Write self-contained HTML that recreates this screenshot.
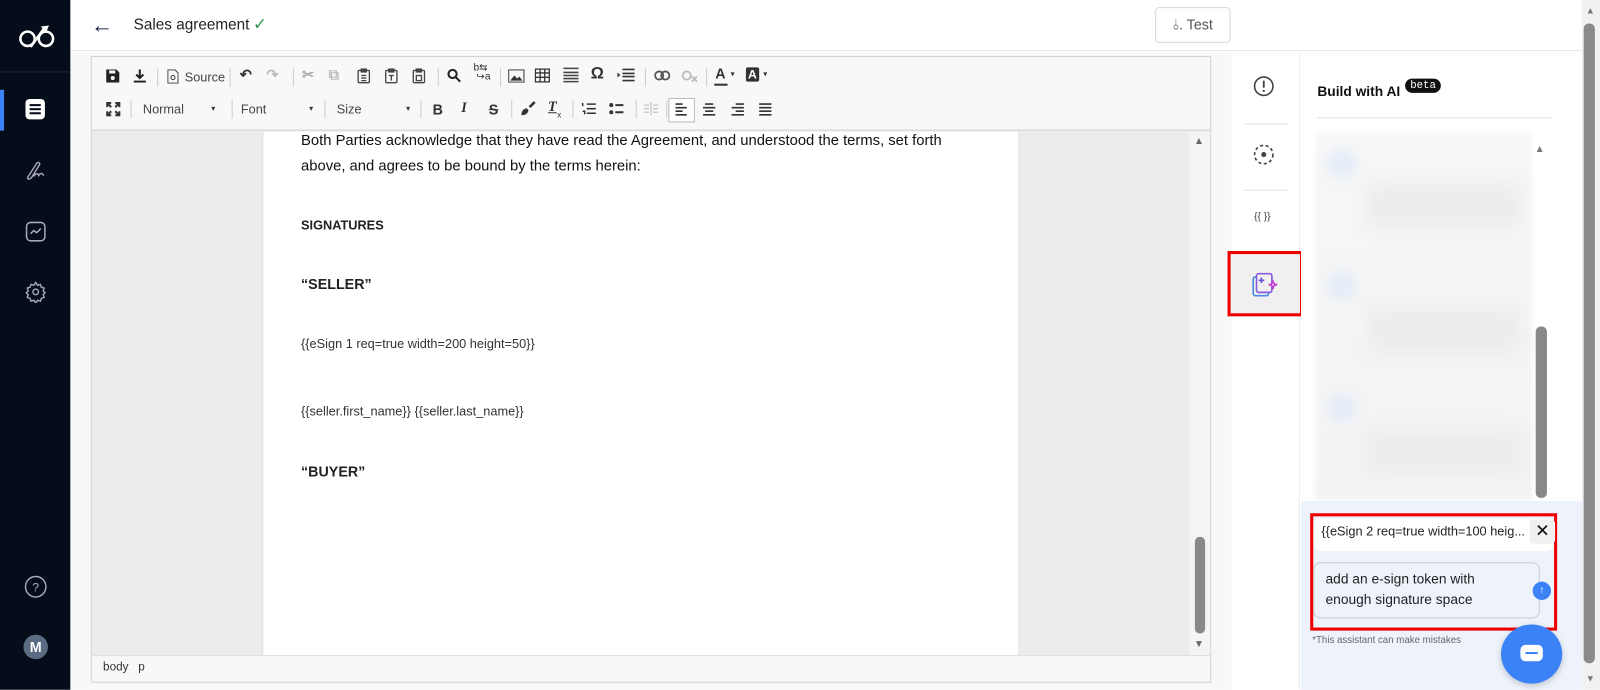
<!DOCTYPE html>
<html><head><meta charset="utf-8"><style>
*{box-sizing:border-box;margin:0;padding:0}
body{width:1600px;height:689px;overflow:hidden;background:#fff;font-family:"Liberation Sans",sans-serif;position:relative;color:#222}
#w{position:absolute;left:0;top:0;width:1568px;height:676px;transform:scale(1.0204);transform-origin:0 0}
.abs{position:absolute}
.side{left:0;top:0;width:69px;height:676px;background:#050d1a}
.tb{font-size:13px;color:#333}
.ic{position:absolute;color:#333;font-size:14px;font-weight:bold}
.sep{position:absolute;width:1px;height:18px;background:#ccc}
.doc{font-size:14.5px;color:#111;line-height:25px}
</style></head><body><div id="w">
<div class="abs side">
 <svg class="abs" style="left:18px;top:24px" width="38" height="24" viewBox="0 0 38 24"><circle cx="9" cy="14" r="7" fill="none" stroke="#fff" stroke-width="2.5"/><circle cx="27" cy="14" r="7" fill="none" stroke="#fff" stroke-width="2.5"/><path d="M12 22 L25 4" stroke="#fff" stroke-width="2.5"/><path d="M22 2 L30 1 L27 8z" fill="#fff"/></svg>
 <div class="abs" style="left:0;top:70px;width:69px;height:1px;background:#1e2838"></div>
 <div class="abs" style="left:0;top:88px;width:4px;height:40px;background:#3b82f6"></div>
 <div class="abs" style="left:25px;top:97px;width:19px;height:20px;border-radius:4px;background:#fff"></div>
 <div class="abs" style="left:29px;top:102px;width:11px;height:2px;background:#050d1a;box-shadow:0 4px 0 #050d1a,0 8px 0 #050d1a"></div>
 <svg class="abs" style="left:24px;top:156px" width="22" height="22" viewBox="0 0 22 22" fill="none" stroke="#aab" stroke-width="1.4"><path d="M3 18 L12 4 Q14 2 15 5 L7 18 Q3 21 3 18z M9 17 Q12 12 14 16 Q16 12 19 16"/></svg>
 <svg class="abs" style="left:25px;top:217px" width="20" height="20" viewBox="0 0 20 20" fill="none" stroke="#aab" stroke-width="1.5"><rect x="1" y="1" width="18" height="18" rx="4"/><path d="M5 12 L8 9 L11 11 L15 7"/></svg>
 <svg class="abs" style="left:24px;top:275px" width="22" height="22" viewBox="0 0 24 24" fill="none" stroke="#aab" stroke-width="1.5"><circle cx="12" cy="12" r="3"/><path d="M12 2l2 3 3-1 1 3 3 1-1 3 2 2-2 2 1 3-3 1-1 3-3-1-2 3-2-3-3 1-1-3-3-1 1-3-2-2 2-2-1-3 3-1 1-3 3 1z"/></svg>
 <svg class="abs" style="left:24px;top:564px" width="22" height="22" viewBox="0 0 22 22" fill="none" stroke="#aab" stroke-width="1.4"><circle cx="11" cy="11" r="10"/><text x="11" y="15.5" fill="#aab" stroke="none" font-size="12" text-anchor="middle" font-family="Liberation Sans">?</text></svg>
 <div class="abs" style="left:23px;top:622px;width:24px;height:24px;border-radius:50%;background:#5a6b82;color:#fff;font-weight:bold;font-size:14px;text-align:center;line-height:24px">M</div>
</div>
<div class="abs" style="left:69px;top:0;width:1481px;height:50px;background:#fff;border-bottom:1px solid #e6e8ec"></div>
<div class="abs" style="left:89px;top:12px;font-size:22px;color:#1e2a4a">←</div>
<div class="abs" style="left:131px;top:16px;font-size:15px;color:#222">Sales agreement</div>
<div class="abs" style="left:248px;top:14px;font-size:16px;color:#2a9a4a">✓</div>
<div class="abs" style="left:1132px;top:7px;width:74px;height:35px;border:1px solid #d5d8dc;border-radius:4px;font-size:14px;color:#555;text-align:center;line-height:33px">⫰. Test</div>
<div class="abs" style="left:69px;top:51px;width:1138px;height:625px;background:#f7f8fa"></div>
<div class="abs" style="left:89px;top:55px;width:1098px;height:614px;border:1px solid #d1d1d1;background:#ececec"></div>
<div class="abs" style="left:90px;top:56px;width:1096px;height:72px;background:#f8f8f8;border-bottom:1px solid #d1d1d1"></div>
<div class="abs tb" style="left:90px;top:56px;width:1096px;height:72px">
 <svg class="abs" style="left:14px;top:12px" width="13" height="13" viewBox="0 0 13 13"><path d="M0 1Q0 0 1 0H10L13 3V12Q13 13 12 13H1Q0 13 0 12z" fill="#222"/><rect x="3" y="1" width="6" height="3" fill="#f8f8f8"/><circle cx="6.5" cy="8.5" r="2" fill="#f8f8f8"/></svg>
 <svg class="abs" style="left:41px;top:12px" width="12" height="13" viewBox="0 0 12 13"><path d="M6 0v8M2.5 5 6 8.5 9.5 5" stroke="#222" stroke-width="2" fill="none"/><rect x="0" y="11" width="12" height="2" fill="#222"/></svg>
 <div class="sep" style="left:64px;top:11px"></div>
 <svg class="abs" style="left:74px;top:12px" width="11" height="14" viewBox="0 0 11 14" fill="none" stroke="#444"><path d="M.5.5h7l3 3v10h-10z"/><circle cx="5.5" cy="8" r="2"/></svg>
 <span class="abs" style="left:91px;top:13px;font-size:12.5px;color:#444">Source</span>
 <div class="sep" style="left:135px;top:11px"></div>
 <span class="ic" style="left:145px;top:9px">↶</span><span class="ic" style="left:171px;top:9px;color:#bbb">↷</span>
 <div class="sep" style="left:197px;top:11px"></div>
 <span class="ic" style="left:206px;top:9px;color:#aaa">✂</span><span class="ic" style="left:232px;top:9px;color:#bbb">⧉</span>
 <svg class="abs" style="left:260px;top:11px" width="80" height="15" viewBox="0 0 80 15" fill="none" stroke="#444" stroke-width="1.3"><rect x="1" y="2" width="11" height="12" rx="1"/><rect x="4" y="0.5" width="5" height="3" fill="#444"/><path d="M4 7h5M4 9.5h5M4 12h5"/><rect x="28" y="2" width="11" height="12" rx="1"/><rect x="31" y="0.5" width="5" height="3" fill="#444"/><path d="M31 7h5M33.5 7v5"/><rect x="55" y="2" width="11" height="12" rx="1"/><rect x="58" y="0.5" width="5" height="3" fill="#444"/><rect x="58" y="7" width="5" height="5"/></svg>
 <div class="sep" style="left:339px;top:11px"></div>
 <svg class="abs" style="left:348px;top:11px" width="14" height="14" viewBox="0 0 14 14" fill="none" stroke="#222" stroke-width="2"><circle cx="5.5" cy="5.5" r="4"/><path d="M8.5 8.5 13 13"/></svg>
 <span class="abs" style="left:374px;top:6px;font-size:10px;color:#333;line-height:9px">b⇆<br>&nbsp;↪a</span>
 <div class="sep" style="left:400px;top:11px"></div>
 <svg class="abs" style="left:408px;top:12px" width="16" height="13" viewBox="0 0 16 13"><rect x=".5" y=".5" width="15" height="12" fill="none" stroke="#333"/><path d="M2 11 6 6 9 9 11 7 14 11z" fill="#333"/></svg>
 <svg class="abs" style="left:434px;top:11px" width="15" height="14" viewBox="0 0 15 14" fill="none" stroke="#333" stroke-width="1.3"><rect x=".7" y=".7" width="13.6" height="12.6"/><path d="M.7 4.5h13.6M.7 8.8h13.6M5.3 .7v12.6M9.8 .7v12.6"/></svg>
 <svg class="abs" style="left:462px;top:10px" width="15" height="16" viewBox="0 0 15 16" stroke="#444" stroke-width="1.5"><path d="M0 1h15M0 5h15M0 8h15M0 11h15M0 14h15"/></svg>
 <span class="ic" style="left:489px;top:8px;font-size:16px">Ω</span>
 <svg class="abs" style="left:515px;top:11px" width="17" height="13" viewBox="0 0 17 13"><path d="M0 4l3 2.5L0 9z" fill="#333"/><path d="M5 1h12M5 5h12M5 8h12M5 12h12" stroke="#333" stroke-width="1.6"/></svg>
 <div class="sep" style="left:542px;top:11px"></div>
 <svg class="abs" style="left:551px;top:13px" width="16" height="10" viewBox="0 0 16 10" fill="none" stroke="#555" stroke-width="1.8"><rect x="1" y="1" width="8" height="8" rx="4"/><rect x="7" y="1" width="8" height="8" rx="4"/></svg>
 <svg class="abs" style="left:578px;top:13px" width="16" height="12" viewBox="0 0 16 12" fill="none" stroke="#bbb" stroke-width="1.8"><rect x="1" y="1" width="8" height="8" rx="4"/><path d="M10 6l5 5M15 6l-5 5"/></svg>
 <div class="sep" style="left:602px;top:11px"></div>
 <span class="ic" style="left:611px;top:8px">A</span><div class="abs" style="left:610px;top:26px;width:13px;height:2px;background:#333"></div><span class="abs" style="left:626px;top:12px;font-size:8px">▾</span>
 <span class="ic" style="left:641px;top:10px;background:#333;color:#fff;padding:0 2px;font-size:12px;line-height:14px;border-radius:2px">A</span><span class="abs" style="left:658px;top:12px;font-size:8px">▾</span>
 <svg class="abs" style="left:14px;top:44px" width="14" height="14" viewBox="0 0 14 14" stroke="#333" stroke-width="2" fill="none"><path d="M1 5V1h4M9 1h4v4M13 9v4H9M5 13H1V9M1 1l4 4M13 1 9 5M13 13 9 9M1 13l4-4"/></svg>
 <div class="sep" style="left:38px;top:42px"></div>
 <span class="abs" style="left:50px;top:44px;font-size:12.5px;color:#444">Normal</span><span class="abs" style="left:117px;top:46px;font-size:8px">▾</span>
 <div class="sep" style="left:137px;top:42px"></div>
 <span class="abs" style="left:146px;top:44px;font-size:12.5px;color:#444">Font</span><span class="abs" style="left:213px;top:46px;font-size:8px">▾</span>
 <div class="sep" style="left:228px;top:42px"></div>
 <span class="abs" style="left:240px;top:44px;font-size:12.5px;color:#444">Size</span><span class="abs" style="left:308px;top:46px;font-size:8px">▾</span>
 <div class="sep" style="left:322px;top:42px"></div>
 <span class="ic" style="left:334px;top:43px">B</span><span class="ic" style="left:362px;top:43px;font-style:italic;font-family:'Liberation Serif'">I</span><span class="ic" style="left:389px;top:43px;text-decoration:line-through">S</span>
 <div class="sep" style="left:411px;top:42px"></div>
 <svg class="abs" style="left:420px;top:43px" width="15" height="15" viewBox="0 0 15 15"><path d="M9 6 14 1" stroke="#333" stroke-width="2.5"/><path d="M1 14Q1 8 6 7L8 9Q7 14 1 14z" fill="#333"/></svg>
 <span class="ic" style="left:447px;top:42px;font-style:italic;text-decoration:underline;font-family:'Liberation Serif'">T</span><span class="abs" style="left:456px;top:52px;font-size:8px">x</span>
 <div class="sep" style="left:471px;top:42px"></div>
 <svg class="abs" style="left:480px;top:44px" width="14" height="13" viewBox="0 0 14 13" stroke="#333" stroke-width="1.5"><path d="M5 2h9M5 6.5h9M5 11h9M1 1v3M1 9h2v3" fill="none"/></svg>
 <svg class="abs" style="left:507px;top:44px" width="14" height="13" viewBox="0 0 14 13"><circle cx="2" cy="3" r="2" fill="#333"/><circle cx="2" cy="10" r="2" fill="#333"/><path d="M6 3h8M6 10h8" stroke="#333" stroke-width="2"/></svg>
 <div class="sep" style="left:533px;top:42px"></div>
 <svg class="abs" style="left:541px;top:44px" width="14" height="13" viewBox="0 0 14 13" stroke="#ccc" stroke-width="1.5"><path d="M7 0v13M9 3h5M9 6.5h5M9 10h5M0 3h5M0 6.5h5M0 10h5"/></svg>
 <div class="sep" style="left:563px;top:42px"></div>
 <div class="abs" style="left:565px;top:40px;width:26px;height:24px;border:1px solid #bbb;background:#fff"></div>
 <svg class="abs" style="left:572px;top:45px" width="100" height="13" viewBox="0 0 100 13" stroke="#333" stroke-width="1.6"><path d="M0 1h7M0 4.5h11M0 8h7M0 11.5h11"/><path d="M29 1h8M27 4.5h12M29 8h8M27 11.5h12"/><path d="M59 1h8M55 4.5h12M59 8h8M55 11.5h12"/><path d="M82 1h12M82 4.5h12M82 8h12M82 11.5h12"/></svg>
</div>
<div class="abs" style="left:257px;top:129px;width:742px;height:513px;background:#fff;border-left:1px solid #ddd;border-right:1px solid #ddd"></div>
<div class="abs doc" style="left:295px;top:126px;width:650px">Both Parties acknowledge that they have read the Agreement, and understood the terms, set forth above, and agrees to be bound by the terms herein:</div>
<div class="abs" style="left:295px;top:214px;font-size:12.5px;font-weight:bold">SIGNATURES</div>
<div class="abs" style="left:295px;top:270px;font-size:14px;font-weight:bold">“SELLER”</div>
<div class="abs" style="left:295px;top:330px;font-size:12.5px;color:#333">{{eSign 1 req=true width=200 height=50}}</div>
<div class="abs" style="left:295px;top:396px;font-size:12.5px;color:#333">{{seller.first_name}} {{seller.last_name}}</div>
<div class="abs" style="left:295px;top:454px;font-size:14px;font-weight:bold">“BUYER”</div>
<div class="abs" style="left:1165px;top:129px;width:21px;height:513px;background:#f4f4f4"></div>
<div class="abs" style="left:1170px;top:133px;font-size:10px;color:#666">▲</div>
<div class="abs" style="left:1170px;top:626px;font-size:10px;color:#666">▼</div>
<div class="abs" style="left:1171px;top:526px;width:10px;height:95px;border-radius:5px;background:#888"></div>
<div class="abs" style="left:90px;top:642px;width:1096px;height:26px;background:#f8f8f8;border-top:1px solid #ddd"></div>
<div class="abs" style="left:101px;top:648px;font-size:11.5px;color:#333">body &nbsp; p</div>
<div class="abs" style="left:1207px;top:51px;width:67px;height:625px;background:#fff;border-right:1px solid #eee"></div>
<svg class="abs" style="left:1228px;top:74px" width="21" height="21" viewBox="0 0 21 21"><circle cx="10.5" cy="10.5" r="9" fill="none" stroke="#444" stroke-width="1.6"/><path d="M10.5 5v7" stroke="#444" stroke-width="1.8"/><circle cx="10.5" cy="15" r="1.1" fill="#444"/></svg>
<div class="abs" style="left:1219px;top:121px;width:44px;height:1px;background:#e2e2e2"></div>
<svg class="abs" style="left:1228px;top:141px" width="21" height="21" viewBox="0 0 21 21"><circle cx="10.5" cy="10.5" r="9" fill="none" stroke="#444" stroke-width="1.6" stroke-dasharray="3 2.5"/><circle cx="10.5" cy="10.5" r="2.5" fill="#444"/></svg>
<div class="abs" style="left:1219px;top:186px;width:44px;height:1px;background:#e2e2e2"></div>
<div class="abs" style="left:1229px;top:207px;font-size:10px;color:#444">{{ }}</div>
<div class="abs" style="left:1203px;top:246px;width:74px;height:64px;border:3px solid #e00;background:#f0f0f0"></div>
<svg class="abs" style="left:1226px;top:265px" width="28" height="28" viewBox="0 0 26 26" fill="none" stroke-width="1.5"><rect x="2" y="6" width="14" height="17" rx="2" stroke="#4a8de0"/><rect x="5" y="3" width="14" height="17" rx="2" stroke="#8a5ae0" fill="#f0f0f0"/><path d="M9.5 6.5v5M7 9h5" stroke="#6a4ad0"/><path d="M20 9 Q20 13 24 13 Q20 13 20 17 Q20 13 16 13 Q20 13 20 9z" stroke="#c040d0" fill="#f0f0f0"/></svg>
<div class="abs" style="left:1275px;top:51px;width:275px;height:625px;background:#fff"></div>
<div class="abs" style="left:1291px;top:82px;font-size:13.5px;font-weight:bold;color:#111">Build with AI</div>
<div class="abs" style="left:1377px;top:77px;background:#111;color:#fff;font-size:10.5px;font-family:'Liberation Mono';border-radius:8px;padding:0 5px;line-height:14px">beta</div>
<div class="abs" style="left:1291px;top:115px;width:230px;height:1px;background:#e0e0e0"></div>
<div class="abs" style="left:1289px;top:130px;width:213px;height:360px;background:linear-gradient(#f7f7f7,#f3f3f3);filter:blur(2px)"></div>
<div class="abs" style="left:1300px;top:145px;width:30px;height:30px;border-radius:50%;background:#e6edf8;filter:blur(5px)"></div>
<div class="abs" style="left:1340px;top:180px;width:150px;height:45px;background:#ececec;filter:blur(8px)"></div>
<div class="abs" style="left:1300px;top:265px;width:30px;height:30px;border-radius:50%;background:#e6edf8;filter:blur(5px)"></div>
<div class="abs" style="left:1340px;top:300px;width:150px;height:45px;background:#ececec;filter:blur(8px)"></div>
<div class="abs" style="left:1300px;top:385px;width:30px;height:30px;border-radius:50%;background:#e6edf8;filter:blur(5px)"></div>
<div class="abs" style="left:1340px;top:420px;width:150px;height:45px;background:#ececec;filter:blur(8px)"></div>
<div class="abs" style="left:1504px;top:141px;font-size:10px;color:#777">▲</div>
<div class="abs" style="left:1505px;top:320px;width:11px;height:168px;border-radius:5px;background:#888"></div>
<div class="abs" style="left:1275px;top:491px;width:275px;height:185px;background:#edf2fb"></div>
<div class="abs" style="left:1284px;top:503px;width:242px;height:115px;border:3px solid #e00"></div>
<div class="abs" style="left:1288px;top:508px;width:234px;height:32px;background:#fff;border-radius:6px"></div>
<div class="abs" style="left:1295px;top:514px;font-size:12.5px;color:#222">{{eSign 2 req=true width=100 heig...</div>
<div class="abs" style="left:1499px;top:509px;width:25px;height:24px;background:#f0f0f0;border-radius:4px;text-align:center;font-size:17px;line-height:23px;color:#111">✕</div>
<div class="abs" style="left:1287px;top:551px;width:222px;height:55px;border:1px solid #c8ccd2;border-radius:7px;background:#edf2fb"></div>
<div class="abs" style="left:1299px;top:558px;font-size:13.5px;color:#222;line-height:20px">add an e-sign token with<br>enough signature space</div>
<div class="abs" style="left:1502px;top:570px;width:18px;height:18px;border-radius:50%;background:#3b82f6;color:#fff;font-size:10px;text-align:center;line-height:18px;font-weight:bold">↑</div>
<div class="abs" style="left:1286px;top:622px;font-size:9.5px;color:#666">*This assistant can make mistakes</div>
<div class="abs" style="left:1471px;top:612px;width:60px;height:58px;border-radius:50%;background:#3b82f6;box-shadow:0 2px 6px rgba(0,0,0,.2)"></div>
<div class="abs" style="left:1490px;top:632px;width:22px;height:16px;border-radius:5px;background:#fff"></div>
<div class="abs" style="left:1495px;top:639px;width:12px;height:2px;background:#3b82f6"></div>
<div class="abs" style="left:1550px;top:0;width:18px;height:676px;background:#f1f1f1"></div>
<div class="abs" style="left:1554px;top:5px;font-size:9px;color:#777">▲</div>
<div class="abs" style="left:1554px;top:660px;font-size:9px;color:#777">▼</div>
<div class="abs" style="left:1552px;top:23px;width:11px;height:627px;border-radius:5px;background:#8a8a8a"></div>
</div></body></html>
